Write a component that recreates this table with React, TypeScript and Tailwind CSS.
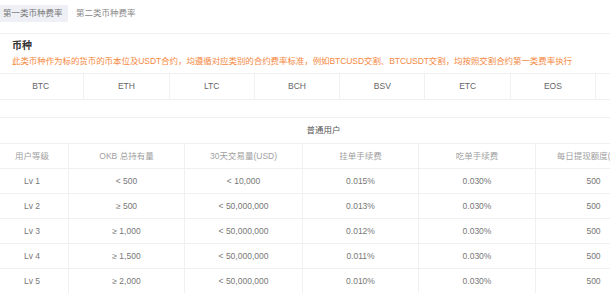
const coins = ['BTC', 'ETH', 'LTC', 'BCH', 'BSV', 'ETC', 'EOS', ''];

const colWidths = ['w-[72px]', 'w-[116px]', 'w-[118px]', 'w-[116px]', 'w-[117px]', 'w-[116px]'];

const headers = ['用户等级', 'OKB 总持有量', '30天交易量(USD)', '挂单手续费', '吃单手续费', '每日提现额度(BTC)'];

const rows = [
  ['Lv 1', '< 500', '< 10,000', '0.015%', '0.030%', '500'],
  ['Lv 2', '≥ 500', '< 50,000,000', '0.013%', '0.030%', '500'],
  ['Lv 3', '≥ 1,000', '< 50,000,000', '0.012%', '0.030%', '500'],
  ['Lv 4', '≥ 1,500', '< 50,000,000', '0.011%', '0.030%', '500'],
  ['Lv 5', '≥ 2,000', '< 50,000,000', '0.010%', '0.030%', '500'],
];

export default function App() {
  return (
    <div
      className="w-[610px] h-[293px] overflow-hidden bg-white text-[8.5px] text-[#666]"
      style={{ fontFamily: '"Liberation Sans", "Noto Sans CJK SC", sans-serif' }}
    >
      {/* Tabs */}
      <div className="h-[34px] border-b border-[#f0f0f0] pt-[5px] flex items-start">
        <div className="h-[17px] w-[68px] bg-[#eef0f5] flex items-center pl-[3px] text-[#777]">第一类币种费率</div>
        <div className="h-[17px] ml-[8px] flex items-center text-[#888]">第二类币种费率</div>
      </div>

      {/* Title */}
      <div className="px-[12px] pt-[5px]">
        <div className="text-[10px] leading-[14px] font-bold text-[#333]">币种</div>
        <div className="mt-[2px] leading-[12px] text-[#f5883e] whitespace-nowrap tracking-[-0.08px]">
          此类币种作为标的货币的币本位及USDT合约，均遵循对应类别的合约费率标准，例如BTCUSD交割、BTCUSDT交割，均按照交割合约第一类费率执行
        </div>
      </div>

      {/* Coins */}
      <div className="mt-[6px] h-[27px] border-y border-[#f0f0f0] flex -ml-[2px] w-max">
        {coins.map((c, i) => (
          <div
            key={i}
            className={`w-[85.3px] flex items-center justify-center ${i > 0 ? 'border-l border-[#f0f0f0]' : ''}`}
          >
            {c}
          </div>
        ))}
      </div>

      {/* Fee table */}
      <div className="mt-[17px] -ml-[4px] w-[655px]">
        <div className="h-[26px] border-t border-[#f0f0f0] flex items-center justify-center text-[#555]">普通用户</div>
        <div className="h-[25px] border-t border-[#f0f0f0] flex text-[#a0a0a0]">
          {headers.map((h, i) => (
            <div
              key={h}
              className={`${colWidths[i]} shrink-0 flex items-center justify-center whitespace-nowrap ${i > 0 ? 'border-l border-[#f0f0f0]' : ''}`}
            >
              {h}
            </div>
          ))}
        </div>
        {rows.map((r) => (
          <div key={r[0]} className="h-[25px] border-t border-[#f0f0f0] flex text-[#777]">
            {r.map((v, i) => (
              <div
                key={i}
                className={`${colWidths[i]} shrink-0 flex items-center justify-center whitespace-nowrap ${i > 0 ? 'border-l border-[#f0f0f0]' : ''}`}
              >
                {v}
              </div>
            ))}
          </div>
        ))}
      </div>
    </div>
  );
}
